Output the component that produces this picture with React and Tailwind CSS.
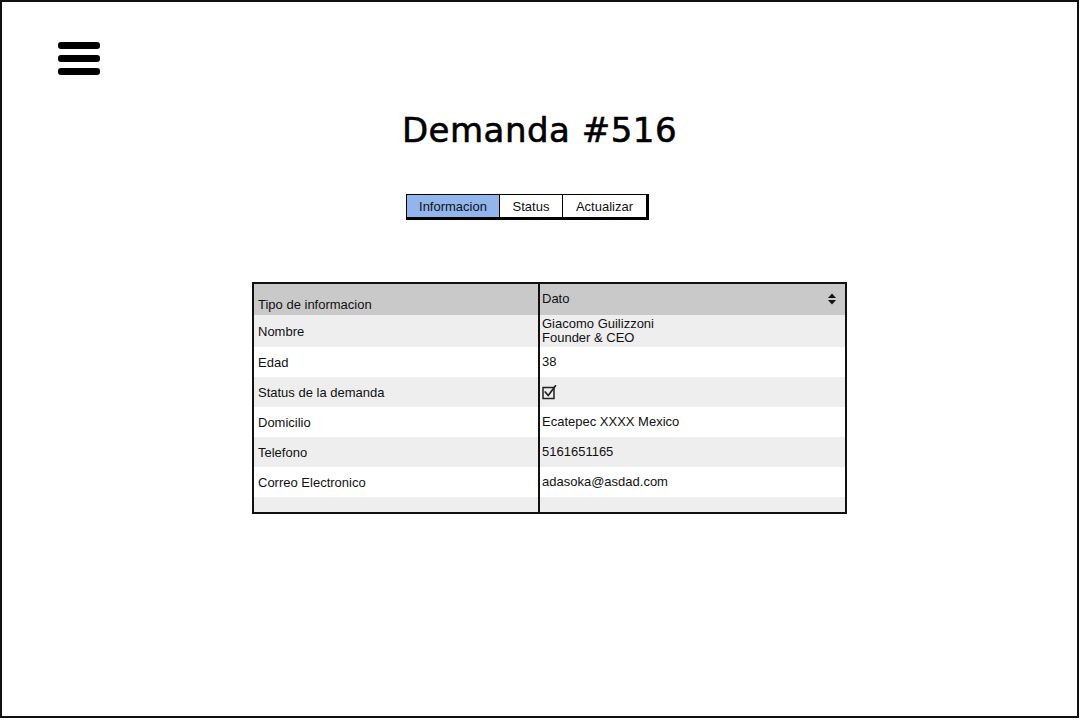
import React from "react";

const rows = [
  { label: "Nombre", value: ["Giacomo Guilizzoni", "Founder & CEO"], h: "h-[32px]", bg: "bg-[#eeeeee]" },
  { label: "Edad", value: ["38"], h: "h-[30px]", bg: "bg-white" },
  { label: "Status de la demanda", value: "check", h: "h-[30px]", bg: "bg-[#eeeeee]" },
  { label: "Domicilio", value: ["Ecatepec XXXX Mexico"], h: "h-[30px]", bg: "bg-white" },
  { label: "Telefono", value: ["5161651165"], h: "h-[30px]", bg: "bg-[#eeeeee]" },
  { label: "Correo Electronico", value: ["adasoka@asdad.com"], h: "h-[30px]", bg: "bg-white" },
];

function Check() {
  return (
    <svg width="16" height="16" viewBox="0 0 16 16" className="block">
      <rect x="1" y="3.5" width="11" height="11" fill="none" stroke="#222" strokeWidth="1.5" />
      <path d="M3.2 8 L6.2 11.5 L13.5 1.8" fill="none" stroke="#222" strokeWidth="1.7" strokeLinecap="round" strokeLinejoin="round" />
    </svg>
  );
}

function Sort() {
  return (
    <svg width="10" height="14" viewBox="0 0 10 14" className="block">
      <path d="M1 6 L5 1.5 L9 6 Z" fill="#111" />
      <path d="M1 8 L5 12.5 L9 8 Z" fill="#111" />
    </svg>
  );
}

export default function App() {
  return (
    <div
      className="w-[1079px] h-[718px] border-2 border-[#111] bg-white flex flex-col text-[#111]"
      style={{ fontFamily: '"Liberation Sans", Arial, sans-serif' }}
    >
      <div className="mt-[40px] ml-[56px] flex flex-col gap-[6px] w-[42px]">
        <div className="h-[7px] rounded-[3px] bg-black" />
        <div className="h-[7px] rounded-[3px] bg-black" />
        <div className="h-[7px] rounded-[3px] bg-black" />
      </div>

      <div
        className="mt-[32px] h-[46px] flex items-center justify-center text-[34px] leading-[46px] tracking-[0.5px] text-black [-webkit-text-stroke:0.6px_black]"
        style={{ fontFamily: '"DejaVu Sans", sans-serif' }}
      >
        Demanda #516
      </div>

      <div className="mt-[41px] ml-[404px] flex">
        <div className="flex h-[26px] border border-black border-r-[3px] border-b-[3px] text-[13px] leading-none">
          <div className="w-[93px] bg-[#91b6ee] flex items-center justify-center border-r border-black">Informacion</div>
          <div className="w-[63px] flex items-center justify-center border-r border-black">Status</div>
          <div className="w-[83px] flex items-center justify-center">Actualizar</div>
        </div>
      </div>

      <div className="mt-[62px] ml-[250px] w-[595px] border-2 border-[#111] flex flex-col text-[13px] leading-[15px]">
        <div className="flex h-[31px] bg-[#c9c9c9]">
          <div className="w-[286px] border-r-2 border-[#111] pl-[4px] flex items-end pb-[3px]">Tipo de informacion</div>
          <div className="flex-1 pl-[2px] flex items-start pt-[7px] justify-between pr-[8px]">
            <span>Dato</span>
            <span className="mt-[1px]"><Sort /></span>
          </div>
        </div>
        {rows.map((r) => (
          <div key={r.label} className={`flex ${r.h} ${r.bg}`}>
            <div className="w-[286px] border-r-2 border-[#111] pl-[4px] flex items-center">{r.label}</div>
            <div className="flex-1 pl-[2px] flex flex-col justify-center">
              {r.value === "check" ? (
                <Check />
              ) : (
                r.value.map((v) => (
                  <span key={v} className="leading-[14px]">{v}</span>
                ))
              )}
            </div>
          </div>
        ))}
        <div className="flex h-[15px] bg-[#eeeeee]">
          <div className="w-[286px] border-r-2 border-[#111]" />
          <div className="flex-1" />
        </div>
      </div>
    </div>
  );
}
